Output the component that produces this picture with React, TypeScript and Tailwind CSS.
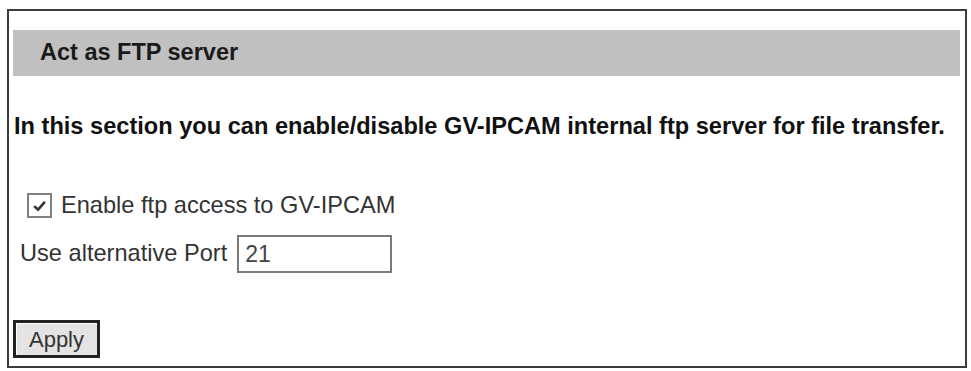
import React from 'react';

export default function App() {
  return (
    <div className="w-[971px] h-[371px] bg-white pt-[9px] pl-[7px] font-['Liberation_Sans',Arial,sans-serif]">
      <div className="w-[960px] h-[359px] border-2 border-[#3c3c3c] flex flex-col">
        {/* Section header */}
        <div className="mt-[19px] ml-[4px] mr-[5px] h-[46px] bg-[#c0c0c0] flex items-center pl-[27px]">
          <span className="text-[23.5px] font-bold text-[#1a1a1a]">Act as FTP server</span>
        </div>

        {/* Description */}
        <p className="mt-[36px] pl-[5px] text-[23.6px] leading-[28px] font-bold text-[#111] whitespace-nowrap">
          In this section you can enable/disable GV-IPCAM internal ftp server for file transfer.
        </p>

        {/* Enable checkbox */}
        <label className="mt-[53px] pl-[18px] flex items-center gap-[9px] h-[25px]">
          <span className="shrink-0 w-[25px] h-[25px] border-2 border-[#808080] bg-white flex items-center justify-center">
            <svg viewBox="0 0 16 16" className="w-[19px] h-[19px]">
              <path d="M3.5 8.5 L6.8 11.5 L12.5 5" fill="none" stroke="#333" strokeWidth="2.2" />
            </svg>
          </span>
          <span className="text-[23.6px] text-[#333]">Enable ftp access to GV-IPCAM</span>
        </label>

        {/* Port */}
        <div className="mt-[17px] pl-[11px] flex items-center gap-[10px]">
          <span className="text-[23.6px] text-[#333]">Use alternative Port</span>
          <div className="w-[155px] h-[38px] border-2 border-[#7a7a7a] flex items-center pl-[6px]">
            <span className="text-[23px] text-[#444]">21</span>
          </div>
        </div>

        {/* Apply */}
        <div className="mt-[47px] ml-[4px]">
          <button className="w-[87px] h-[38px] border-[3px] border-[#222] bg-[#e4e4e4] shadow-[inset_1px_1px_0_#fff] text-[22px] text-[#333] flex items-center justify-center">
            Apply
          </button>
        </div>
      </div>
    </div>
  );
}
